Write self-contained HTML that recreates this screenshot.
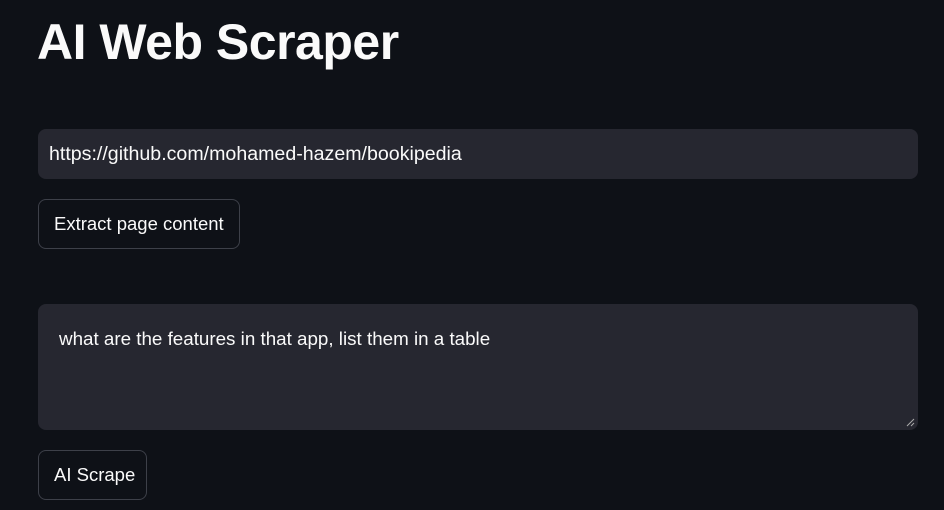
<!DOCTYPE html>
<html><head><meta charset="utf-8"><style>
body{margin:0;width:944px;height:510px;background:#0e1117;color:#fafafa;font-family:"Liberation Sans",sans-serif;overflow:hidden;position:relative}
h1{position:absolute;left:37px;top:12px;margin:0;font-size:50px;font-weight:bold;letter-spacing:-0.5px;line-height:60px}
.in{position:absolute;left:38px;width:880px;background:#262730;border-radius:8px;font-size:18.8px}
.btn{position:absolute;left:38px;height:48px;border:1px solid #3d4049;border-radius:8px;box-sizing:border-box;font-size:18.5px;padding:0 15px;background:#0e1117;white-space:nowrap}
</style></head><body>
<h1>AI Web Scraper</h1>
<div class="in" style="top:129px;height:50px;line-height:50px;padding-left:11px;box-sizing:border-box;font-size:19.6px">https://github.com/mohamed-hazem/bookipedia</div>
<div class="btn" style="top:199px;width:202px;height:50px;line-height:48px">Extract page content</div>
<div class="in" style="top:304px;height:126px;box-sizing:border-box;padding:24px 21px;line-height:22px">what are the features in that app, list them in a table
<svg style="position:absolute;right:3px;bottom:3px" width="9" height="9"><path d="M8 1L1 8M8 5L5 8" stroke="#aaa" stroke-width="1"/></svg></div>
<div class="btn" style="top:450px;width:109px;height:50px;line-height:48px">AI Scrape</div>
</body></html>
